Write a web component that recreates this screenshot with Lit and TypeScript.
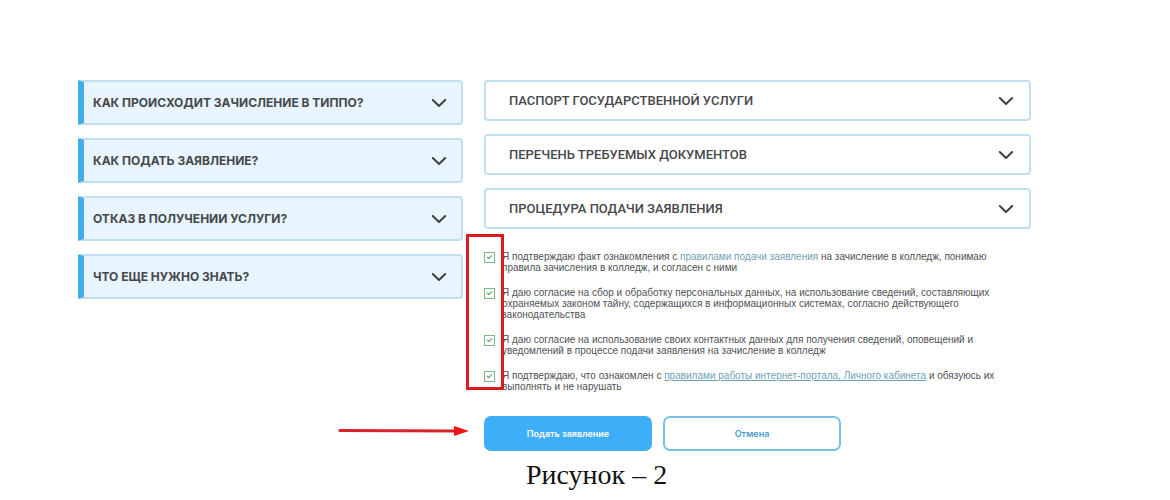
import { LitElement, html, css } from "lit";
import { customElement, property } from "lit/decorators.js";

@customElement("accordion-item")
class AccordionItem extends LitElement {
  @property() heading = "";
  @property({ reflect: true }) variant = "plain";

  static styles = css`
    :host {
      display: block;
    }
    .toggle {
      display: flex;
      align-items: center;
      justify-content: space-between;
      box-sizing: border-box;
      width: 100%;
      min-height: 41px;
      padding: 0 15px 0 23px;
      border: 2px solid #c0e0f0;
      border-radius: 4px;
      background: #fff;
      color: #46484c;
      font: 500 13px/16px Roboto, "Liberation Sans", sans-serif;
      text-align: left;
      cursor: pointer;
    }
    :host([variant="accent"]) .toggle {
      min-height: 45px;
      padding: 0 14px 0 9px;
      border-left: 6px solid #42aee9;
      border-radius: 1px 4px 4px 1px;
      background: #e8f4fe;
      font: 700 12px/16px Inter, "Liberation Sans", sans-serif;
    }
    .chevron {
      flex: none;
      width: 16px;
      height: 10px;
      fill: none;
      stroke: #3c4147;
      stroke-width: 2;
      stroke-linecap: round;
      stroke-linejoin: round;
    }
  `;

  render() {
    return html`
      <button class="toggle" type="button" aria-expanded="false">
        <span>${this.heading}</span>
        <svg class="chevron" viewBox="0 0 16 10" aria-hidden="true">
          <path d="M1.8 2 L8 8 L14.2 2" />
        </svg>
      </button>
    `;
  }
}

@customElement("app-root")
class AppRoot extends LitElement {
  static styles = css`
    :host {
      display: block;
      background: #fff;
      font-family: Inter, "Liberation Sans", sans-serif;
    }
    .page {
      padding: 80px 139px 0 78px;
    }
    .columns {
      display: grid;
      grid-template-columns: 385fr 547fr;
      column-gap: 21px;
      align-items: start;
    }
    .stack {
      display: grid;
      gap: 13px;
    }
    .agreements {
      position: relative;
      display: grid;
      gap: 14px;
      margin-top: 22px;
      padding-right: 22px;
    }
    .agreement {
      display: flex;
      align-items: flex-start;
      gap: 7px;
      color: #505256;
      font: 10px/11px "Liberation Sans", sans-serif;
    }
    .box {
      appearance: none;
      flex: none;
      display: grid;
      place-items: center;
      box-sizing: border-box;
      width: 11px;
      height: 11px;
      margin: 1px 0 0;
      border: 1px solid #7dbb82;
      background: #fff;
    }
    .box:checked::before {
      content: "";
      width: 4px;
      height: 2px;
      margin-bottom: 2px;
      border: solid #5c9f62;
      border-width: 0 0 1px 1px;
      transform: rotate(-45deg);
    }
    .link {
      color: #6f9fb5;
      text-decoration: none;
    }
    .underlined {
      text-decoration: underline;
    }
    .frame {
      position: absolute;
      inset: -17px auto 2px -18px;
      box-sizing: border-box;
      width: 38px;
      border: 3px solid #d91c22;
      pointer-events: none;
    }
    .actions {
      position: relative;
      display: flex;
      gap: 11px;
      margin-top: 24px;
    }
    .action {
      box-sizing: border-box;
      height: 35px;
      border: 2px solid #7cc0ea;
      border-radius: 7px;
      background: #fff;
      color: #4b9bd3;
      font: 600 9px/12px Inter, "Liberation Sans", sans-serif;
      cursor: pointer;
    }
    .submit {
      flex: 0 1 168px;
      border-color: #3eaff7;
      background: #3eaff7;
      color: #fff;
    }
    .cancel {
      flex: 0 1 178px;
    }
    .arrow {
      position: absolute;
      top: 9px;
      left: -146px;
      width: 132px;
      height: 12px;
    }
    .caption {
      margin: 9px 0 0;
      padding-left: 42px;
      color: #111;
      font: 28px/30px "Liberation Serif", serif;
    }
  `;

  render() {
    const topics = [
      "КАК ПРОИСХОДИТ ЗАЧИСЛЕНИЕ В ТИППО?",
      "КАК ПОДАТЬ ЗАЯВЛЕНИЕ?",
      "ОТКАЗ В ПОЛУЧЕНИИ УСЛУГИ?",
      "ЧТО ЕЩЕ НУЖНО ЗНАТЬ?",
    ];
    const sections = [
      "ПАСПОРТ ГОСУДАРСТВЕННОЙ УСЛУГИ",
      "ПЕРЕЧЕНЬ ТРЕБУЕМЫХ ДОКУМЕНТОВ",
      "ПРОЦЕДУРА ПОДАЧИ ЗАЯВЛЕНИЯ",
    ];
    const agreements = [
      html`Я подтверждаю факт ознакомления с <a class="link" href="#rules">правилами подачи заявления</a> на зачисление в колледж, понимаю правила зачисления в колледж, и согласен с ними`,
      html`Я даю согласие на сбор и обработку персональных данных, на использование сведений, составляющих охраняемых законом тайну, содержащихся в информационных системах, согласно действующего законодательства`,
      html`Я даю согласие на использование своих контактных данных для получения сведений, оповещений и уведомлений в процессе подачи заявления на зачисление в колледж`,
      html`Я подтверждаю, что ознакомлен с <a class="link underlined" href="#portal">правилами работы интернет-портала, Личного кабинета</a> и обязуюсь их выполнять и не нарушать`,
    ];
    return html`
      <main class="page">
        <div class="columns">
          <div class="stack">
            ${topics.map((t) => html`<accordion-item variant="accent" .heading=${t}></accordion-item>`)}
          </div>
          <div>
            <div class="stack">
              ${sections.map((s) => html`<accordion-item .heading=${s}></accordion-item>`)}
            </div>
            <div class="agreements">
              ${agreements.map(
                (a, i) => html`
                  <div class="agreement">
                    <input class="box" type="checkbox" id="agree-${i}" checked />
                    <label for="agree-${i}">${a}</label>
                  </div>
                `
              )}
              <div class="frame"></div>
            </div>
            <div class="actions">
              <button class="action submit" type="button">Подать заявление</button>
              <button class="action cancel" type="button">Отмена</button>
              <svg class="arrow" viewBox="0 0 132 12" aria-hidden="true">
                <path d="M2 5.5 L118 6" fill="none" stroke="#d8232a" stroke-width="3" stroke-linecap="round" />
                <path d="M116 1 L131 6 L116 11 Z" fill="#f0141a" />
              </svg>
            </div>
            <p class="caption">Рисунок – 2</p>
          </div>
        </div>
      </main>
    `;
  }
}
